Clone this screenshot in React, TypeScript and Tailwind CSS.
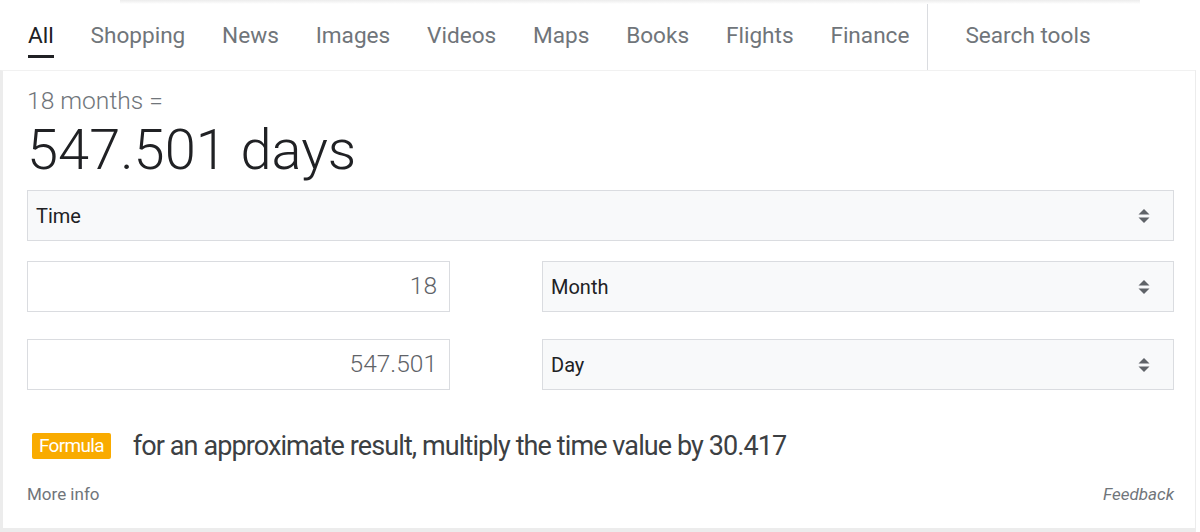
import React from "react";

const Arrows = () => (
  <svg width="14" height="18" viewBox="0 0 14 18" className="shrink-0">
    <path d="M7 2 L12.5 7.5 H1.5 Z" fill="#5f6368" />
    <path d="M7 16 L12.5 10.5 H1.5 Z" fill="#5f6368" />
  </svg>
);

function Select({ label }: { label: string }) {
  return (
    <div className="flex h-[51px] items-center justify-between border border-[#dadce0] bg-[#f8f9fa] pl-[8px] pr-[22px] text-[20px] text-[#202124]">
      <span>{label}</span>
      <Arrows />
    </div>
  );
}

function Input({ value }: { value: string }) {
  return (
    <div className="flex h-[51px] items-center justify-end border border-[#dadce0] bg-white pr-[12px] text-[24.5px] font-light text-[#5f6368]">
      {value}
    </div>
  );
}

export default function App() {
  const tabs = ["Shopping", "News", "Images", "Videos", "Maps", "Books", "Flights", "Finance"];
  return (
    <div className="h-[532px] w-[1200px] overflow-hidden bg-white font-['Roboto',sans-serif]">
      <div className="relative flex h-[70px] items-stretch bg-white">
        <div className="pointer-events-none absolute left-[120px] right-[60px] top-0 h-[4px] bg-gradient-to-b from-[#ececec] to-white" />
        <div className="flex items-stretch pl-[28px]">
          <div className="relative flex items-center pt-[1px] text-[22.6px] text-[#202124]">
            All
            <div className="absolute bottom-[12px] left-0 right-0 h-[3px] bg-[#202124]" />
          </div>
          {tabs.map((t) => (
            <div key={t} className="flex items-center pl-[36.8px] pt-[1px] text-[22.6px] text-[#70757a]">
              {t}
            </div>
          ))}
        </div>
        <div className="ml-[18px] mt-[3px] w-px bg-[#dadce0]" />
        <div className="flex items-center pl-[37px] pt-[1px] text-[22.6px] text-[#70757a]">Search tools</div>
      </div>
      <div className="mr-[4px] h-[462px] border-b-[4px] border-l-[3px] border-r border-t border-[#ececec] border-t-[#f1f1f1] bg-white pl-[24px] pr-[21px]">
        <div className="pt-[16px] text-[24.6px] font-light leading-[28px] text-[#70757a]">18 months =</div>
        <div className="mt-[2px] text-[56px] font-light leading-[66px] text-[#202124]">547.501 days</div>
        <div className="mt-[7px]">
          <Select label="Time" />
        </div>
        <div className="mt-[20px] flex gap-[92px]">
          <div className="w-[423px]">
            <Input value="18" />
          </div>
          <div className="flex-1">
            <Select label="Month" />
          </div>
        </div>
        <div className="mt-[27px] flex gap-[92px]">
          <div className="w-[423px]">
            <Input value="547.501" />
          </div>
          <div className="flex-1">
            <Select label="Day" />
          </div>
        </div>
        <div className="mt-[40px] flex items-center pl-[5px]">
          <span className="rounded-[2px] bg-[#f9ab00] px-[7px] py-[1px] text-[19px] leading-[24px] tracking-[-0.7px] text-white">
            Formula
          </span>
          <span className="ml-[22px] text-[27px] leading-[32px] tracking-[-0.9px] text-[#3c4043]">
            for an approximate result, multiply the time value by 30.417
          </span>
        </div>
        <div className="mt-[20px] flex items-center justify-between">
          <span className="text-[17px] text-[#70757a]">More info</span>
          <span className="text-[17px] italic text-[#70757a]">Feedback</span>
        </div>
      </div>
    </div>
  );
}
